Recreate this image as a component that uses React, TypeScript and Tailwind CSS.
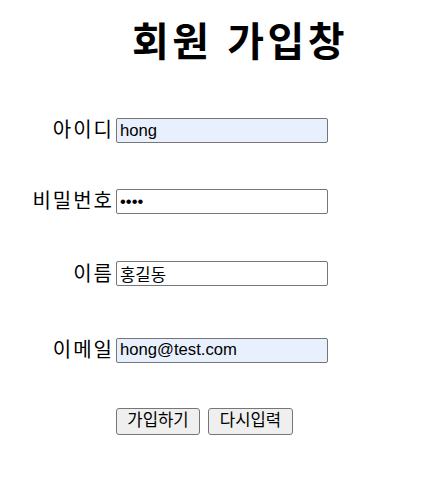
import React from "react";

const kr = { fontFamily: '"Liberation Sans", "Noto Sans CJK KR", sans-serif' };

function Row({ label, children, mt }: { label: string; children: React.ReactNode; mt: string }) {
  return (
    <div className={`flex items-center ${mt}`}>
      <div className="w-[114px] text-right text-[20px] leading-[25px] tracking-[2px] text-black">{label}</div>
      <div className="ml-[2px]">{children}</div>
    </div>
  );
}

const inputCls =
  "w-[212px] h-[25px] border border-[#767676] rounded-[2px] px-[3px] text-[16.67px] text-black outline-none";

export default function App() {
  return (
    <div className="w-[428px] h-[480px] bg-white" style={kr}>
      <h1 className="pt-[17px] pl-[132px] text-[40px] font-bold leading-[50px] tracking-[3.5px] text-black">회원 가입창</h1>
      <Row label="아이디" mt="mt-[51px]">
        <input readOnly value="hong" className={`${inputCls} bg-[#e8f0fe]`} style={kr} />
      </Row>
      <Row label="비밀번호" mt="mt-[46px]">
        <input readOnly type="password" value="hong" className={`${inputCls} bg-white`} style={kr} />
      </Row>
      <Row label="이름" mt="mt-[47px]">
        <input readOnly value="홍길동" className={`${inputCls} bg-white`} style={kr} />
      </Row>
      <Row label="이메일" mt="mt-[50px]">
        <input readOnly value="hong@test.com" className={`${inputCls} bg-[#e8f0fe]`} style={kr} />
      </Row>
      <div className="flex gap-[8px] pl-[116px] mt-[45px]">
        <button className="h-[27px] w-[84px] border border-[#767676] rounded-[3px] bg-[#efefef] text-[16.67px] text-black leading-none">
          가입하기
        </button>
        <button className="h-[27px] w-[85px] border border-[#767676] rounded-[3px] bg-[#efefef] text-[16.67px] text-black leading-none">
          다시입력
        </button>
      </div>
    </div>
  );
}
